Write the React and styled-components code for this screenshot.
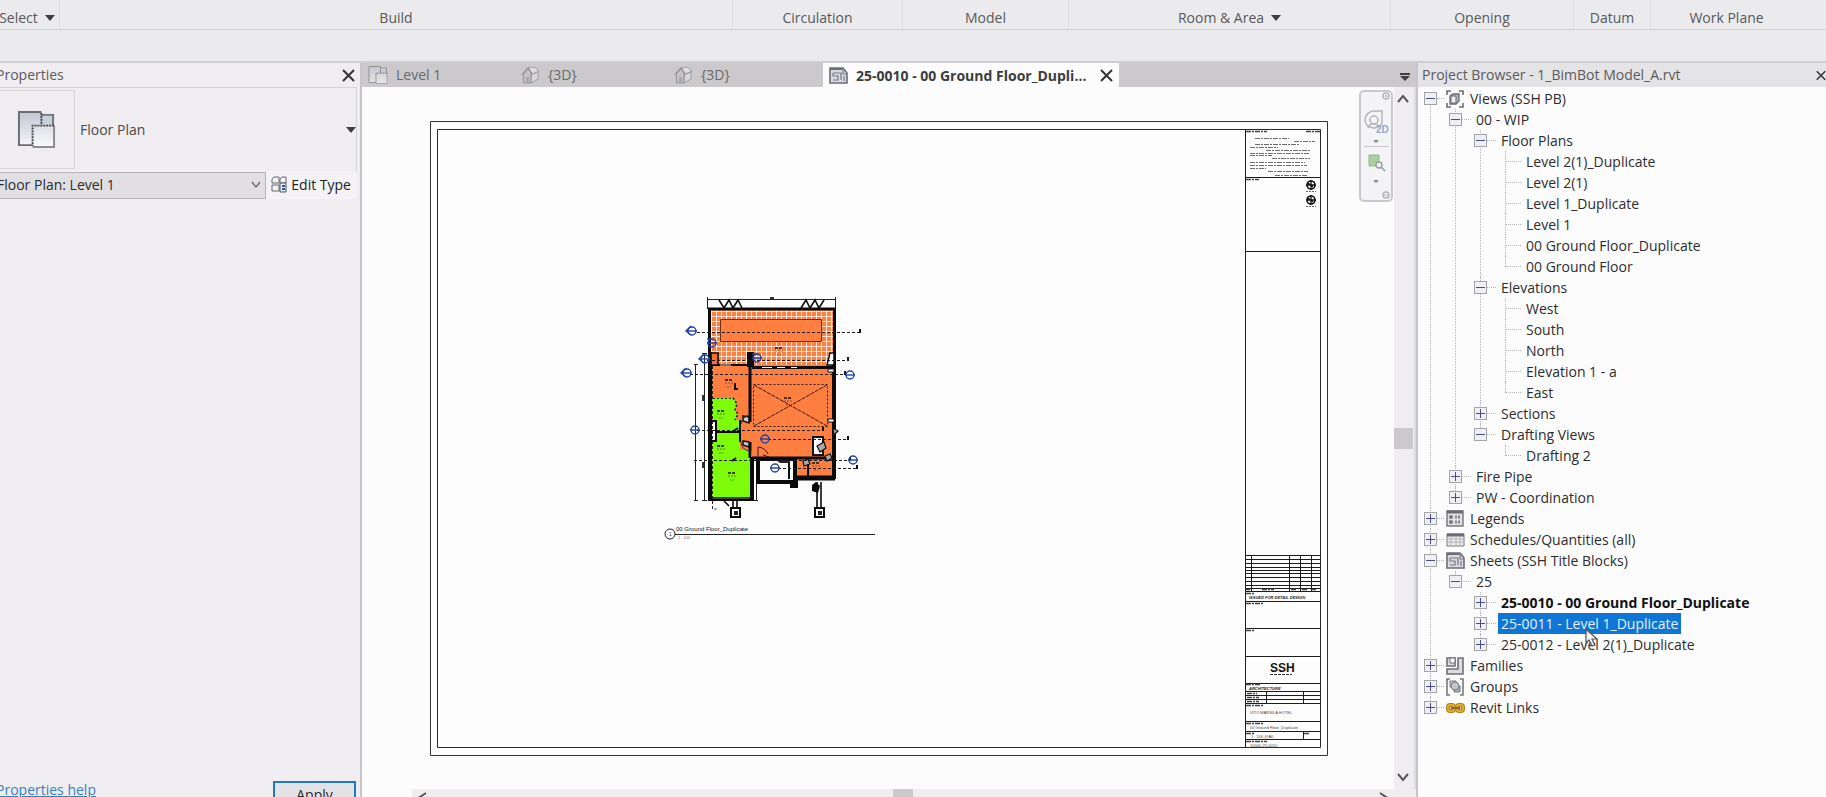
import React from "react";
import styled, { createGlobalStyle, css } from "styled-components";

const GlobalStyle = createGlobalStyle`
  * { box-sizing: border-box; }
  html, body { margin: 0; padding: 0; overflow: hidden; }
  body, button, select {
    font-family: "Open Sans", "Noto Sans", "Liberation Sans", sans-serif;
    font-size: 14px;
    color: #4a4a4c;
  }
  button, select { margin: 0; padding: 0; border: 0; background: none; border-radius: 0; }
`;

const dotted = "#b4b4b8";

/* ---------- shell ---------- */

const Shell = styled.div`
  display: flex;
  flex-direction: column;
  height: 100vh;
  overflow: hidden;
  background: #ebebed;
`;

const Ribbon = styled.nav`
  display: grid;
  grid-template-columns: 65fr 673fr 170fr 166fr 322fr 183fr 77fr 152fr 23fr;
  height: 30px;
  margin-left: -5px;
  border-bottom: 1px solid #d0d0d3;
  padding-bottom: 1px;
`;

const RibbonPanel = styled.div`
  display: flex;
  align-items: center;
  justify-content: center;
  gap: 7px;
  padding-top: 8px;
  border-right: 1px solid ${(p) => (p.$open ? "transparent" : "#dedee1")};
  font-size: 14px;
  line-height: 20px;
  color: #58585b;
  white-space: nowrap;
`;

const RibbonMenu = styled.button`
  display: flex;
  align-items: center;
  gap: 7px;
  font-size: 14px;
  line-height: 20px;
  color: #58585b;
`;

const OptionsBar = styled.div`
  height: 33px;
  border-bottom: 2px solid #cfcfd2;
`;

const Workspace = styled.main`
  flex: 1;
  display: grid;
  grid-template-columns: 362px minmax(0, 1fr) 410px;
  min-height: 0;
  margin-bottom: -12px;
`;

const PanelHeader = styled.header`
  display: flex;
  align-items: center;
  justify-content: space-between;
  height: 24px;
  background: ${(p) => p.$bg};
  color: #5a5a5d;
`;

const PanelTitle = styled.h2`
  margin: 0;
  font-size: 14px;
  font-weight: 400;
  line-height: 24px;
  white-space: nowrap;
`;

const IconButton = styled.button`
  display: flex;
  align-items: center;
  justify-content: center;
  flex: none;
  width: ${(p) => p.$w || 14}px;
  height: ${(p) => p.$h || 14}px;
`;

/* ---------- properties ---------- */

const Properties = styled.section`
  display: flex;
  flex-direction: column;
  margin-left: -4px;
  padding-right: 3px;
  border-right: 2px solid #c6c5c9;
  background: #efedf0;
`;

const TypeSelector = styled.div`
  display: flex;
  align-items: center;
  height: 84px;
  border-top: 1px solid #d5d4d8;
  border-right: 1px solid #d5d4d8;
`;

const TypeTile = styled.div`
  display: flex;
  align-items: center;
  justify-content: center;
  width: 79px;
  height: 79px;
  padding-left: 2px;
  border: 1px solid #d5d4d8;
  border-left: 0;
`;

const TypeName = styled.span`
  flex: 1;
  padding-left: 5px;
  font-size: 14px;
`;

const InstanceRow = styled.div`
  display: flex;
  align-items: center;
  height: 28px;
  padding-right: 6px;
  background: #f4f2f5;
`;

const SelectBox = styled.label`
  position: relative;
  display: block;
  width: 270px;
`;

const InstanceSelect = styled.select`
  appearance: none;
  width: 100%;
  height: 27px;
  padding: 0 30px 2px 0;
  border: 1px solid #b3b2b6;
  background: #e1dfe2;
  font-size: 14px;
  color: #2c2c2e;
`;

const SelectArrow = styled.svg`
  position: absolute;
  right: 5px;
  top: 9px;
  pointer-events: none;
`;

const EditType = styled.button`
  display: flex;
  align-items: center;
  gap: 3px;
  margin-left: auto;
  padding-bottom: 2px;
  font-size: 14px;
  color: #222;
  white-space: nowrap;
`;

const PropertiesFooter = styled.footer`
  display: flex;
  justify-content: space-between;
  margin-top: auto;
  padding: 0 1px 2px 0;
`;

const HelpLink = styled.a`
  font-size: 14px;
  line-height: 18px;
  color: #3a7fc0;
`;

const ApplyButton = styled.button`
  width: 83px;
  height: 26px;
  border: 2px solid #2379bd;
  background: #e3e2e6;
  font-size: 14px;
  color: #2c2c2e;
`;

/* ---------- drawing area ---------- */

const ViewArea = styled.section`
  display: flex;
  flex-direction: column;
  min-width: 0;
  background: #fcfcfc;
`;

const TabBar = styled.div`
  display: flex;
  height: 24px;
  padding-right: 6px;
  background: #cbc9cc;
`;

const Tab = styled.button`
  display: flex;
  align-items: center;
  gap: 8px;
  width: 153px;
  padding-left: 6px;
  font-size: 14px;
  line-height: 20px;
  color: #69686b;
  white-space: nowrap;
`;

const ActiveTab = styled.div`
  display: flex;
  align-items: center;
  justify-content: space-between;
  width: 296px;
  margin-left: 2px;
  padding: 0 6px;
  background: #fcfcfc;
`;

const ActiveTabButton = styled.button`
  display: flex;
  align-items: center;
  gap: 8px;
  font-size: 14px;
  font-weight: 700;
  color: #3c3c3f;
  white-space: nowrap;
`;

const TabMenu = styled.button`
  margin-left: auto;
`;

const ViewRow = styled.div`
  flex: 1;
  display: flex;
  min-height: 0;
`;

const Canvas = styled.div`
  position: relative;
  flex: 1;
  min-width: 0;
`;

const SheetDrawing = styled.svg`
  display: block;
  width: 100%;
  height: auto;
  font-family: "Liberation Sans", sans-serif;
`;

const NavBar = styled.div`
  position: absolute;
  top: 3px;
  right: 1px;
  display: flex;
  flex-direction: column;
  align-items: center;
  width: 34px;
  height: 112px;
  border: 2px solid #c9c9cc;
  border-radius: 5px;
  background: #f4f3f5;
`;

const VScroll = styled.div`
  display: flex;
  flex-direction: column;
  align-items: center;
  justify-content: space-between;
  width: 22px;
  padding: 4px 2px 4px 0;
  border-right: 2px solid #dcdbdf;
  background: #efedf0;
`;

const VThumb = styled.div`
  width: 19px;
  height: 21px;
  background: #cbc9cc;
`;

const HScroll = styled.div`
  display: flex;
  justify-content: space-between;
  height: 20px;
  margin-left: 50px;
  padding: 0 26px 0 4px;
  background: #efedf0;
`;

const HThumb = styled.div`
  width: 20px;
  height: 20px;
  background: #cbc9cc;
`;

/* ---------- project browser ---------- */

const Browser = styled.aside`
  display: flex;
  flex-direction: column;
  border-left: 2px solid #c6c5c9;
  background: #fcfcfc;
  overflow: hidden;
`;

const BrowserHead = styled.div`
  padding-left: 4px;
  background: #e4e3e6;
`;

const Tree = styled.ul`
  list-style: none;
  margin: 0;
  padding: ${(p) => (p.$root ? "1px 0 0" : "0 0 0 25px")};
`;

const TreeItem = styled.li`
  position: relative;
  &::before {
    content: "";
    position: absolute;
    left: 12px;
    top: ${(p) => (p.$start ? "10px" : "0")};
    bottom: 0;
    border-left: 1px dotted ${dotted};
  }
  &:last-child::before {
    bottom: auto;
    height: 10px;
  }
`;

const Row = styled.div`
  position: relative;
  display: flex;
  align-items: center;
  height: 21px;
`;

const Stem = styled.span`
  display: flex;
  align-items: center;
  flex: none;
  width: ${(p) => (p.$icon ? 28 : 30)}px;
  padding-left: ${(p) => (p.$leaf ? 12 : 6)}px;
  &::after {
    content: "";
    flex: 1;
    margin-right: 2px;
    border-top: 1px dotted ${dotted};
  }
`;

const Expander = styled.button`
  position: relative;
  width: 13px;
  height: 13px;
  border: 1px solid #a3a3a8;
  background: #f0f0f4;
  &::before {
    content: "";
    position: absolute;
    left: 1px;
    right: 1px;
    top: 5px;
    height: 1px;
    background: #4b4b91;
  }
  ${(p) =>
    p.$closed &&
    css`
      &::after {
        content: "";
        position: absolute;
        top: 1px;
        bottom: 1px;
        left: 5px;
        width: 1px;
        background: #4b4b91;
      }
    `}
`;

const Label = styled.span`
  padding: 0 3px;
  font-size: 14px;
  line-height: 21px;
  font-weight: ${(p) => (p.$bold ? 700 : 400)};
  color: ${(p) => (p.$selected ? "#e4f1fc" : p.$bold ? "#111" : "#2c2c2e")};
  background: ${(p) => (p.$selected ? "#0f76d6" : "transparent")};
  white-space: nowrap;
`;

const LabelIcon = styled.span`
  display: flex;
  flex: none;
  width: 21px;
`;

const Pointer = styled.svg`
  position: absolute;
  left: 117px;
  top: 15px;
  z-index: 2;
  pointer-events: none;
`;

/* ---------- icons ---------- */

const Caret = ({ w = 10, fill = "#3f3f42" }) => (
  <svg width={w} height={w / 2 + 1} viewBox="0 0 10 6" aria-hidden="true">
    <path d="M0 0h10L5 6z" fill={fill} />
  </svg>
);

const Cross = () => (
  <svg width="13" height="13" viewBox="0 0 13 13" aria-hidden="true">
    <path d="M1 1l11 11M12 1L1 12" stroke="#333336" strokeWidth="2" />
  </svg>
);

const Chevron = ({ d }) => (
  <svg width="12" height="14" viewBox="0 0 12 14" aria-hidden="true">
    <path d={d} fill="none" stroke="#55555a" strokeWidth="2" />
  </svg>
);

const PlanIcon = ({ big }) => (
  <svg width={big ? 39 : 20} height={big ? 39 : 18} viewBox={big ? "0 0 40 40" : "0 1 40 38"} preserveAspectRatio="none" aria-hidden="true">
    <defs>
      <linearGradient id="planShade" x1="0" y1="0" x2="0" y2="1">
        <stop offset="0" stopColor="#c3c7d0" />
        <stop offset="1" stopColor="#f4f4f9" />
      </linearGradient>
      <linearGradient id="planFront" x1="0" y1="0" x2="0" y2="1">
        <stop offset="0" stopColor="#dcdfe6" />
        <stop offset="1" stopColor="#fbfbfd" />
      </linearGradient>
    </defs>
    <g opacity={big ? 1 : 0.6}>
      <path d="M24 5h13v13H24z" fill="#c6d0da" stroke="#73747e" strokeWidth="2" />
      <path d="M2 2h23v14h-9v20H2z" fill="url(#planShade)" />
      <path d="M16 36H2V2h23" fill="none" stroke="#6b6c76" strokeWidth="2" />
      <path d="M16 16h22v22H16z" fill="url(#planFront)" />
      <path d="M38 16v22H16" fill="none" stroke="#8c8c95" strokeWidth="2" />
      <path d="M25 3v13M38 16H16v21" fill="none" stroke="#43434e" strokeWidth="2" strokeDasharray="2 1" />
    </g>
  </svg>
);

const HouseIcon = () => (
  <svg width="19" height="18" viewBox="0 0 19 18" aria-hidden="true">
    <path d="M2 8l5-6 6-1 5 4v8l-8 4H2z" fill="#c4c3c8" />
    <path d="M7 2l6-1 5 4-7 3z" fill="#dedde1" stroke="#a3a2a8" />
    <path d="M10 9l7-3v7l-7 4z" fill="#d8d7db" stroke="#a09fa5" />
    <path d="M1 9l6-7 4 6" fill="none" stroke="#94939a" strokeWidth="1.500" />
    <path d="M2.500 9v8H10V8" fill="none" stroke="#94939a" />
    <path d="M5 17v-6h3v6" fill="#a9a8ae" />
  </svg>
);

const SheetIcon = () => (
  <svg width="19" height="17" viewBox="0 0 19 17" aria-hidden="true">
    <path d="M1 1h13l4 5v10H1z" fill="#d8d9e1" stroke="#6c6c77" strokeWidth="1.600" />
    <path d="M1 2h12" stroke="#6c6c77" strokeWidth="2" />
    <path d="M4 6h8v7M4 6v3h5v4H4M14 2v5h4M15 9v5" fill="none" stroke="#787884" strokeWidth="1.200" />
  </svg>
);

const ViewsIcon = () => (
  <svg width="18" height="18" viewBox="0 0 18 18" aria-hidden="true">
    <path d="M1 5V1h4M13 1h4v4M17 13v4h-4M5 17H1v-4" fill="none" stroke="#6b6b72" strokeWidth="1.600" />
    <path d="M4 6l3-2h6v7l-3 3H4z" fill="#b4b4bc" stroke="#6b6b72" strokeWidth="1.300" />
    <path d="M5 6h5v7H5z" fill="#ededf2" stroke="#6b6b72" />
  </svg>
);

const LegendIcon = () => (
  <svg width="18" height="17" viewBox="0 0 18 17" aria-hidden="true">
    <path d="M1 1h16v15H1z" fill="#e2e2e6" stroke="#77777d" strokeWidth="1.400" />
    <path d="M1 2h16" stroke="#6b6b71" strokeWidth="3" />
    <circle cx="5" cy="7" r="2" fill="#77777d" />
    <circle cx="5" cy="12" r="2" fill="#77777d" />
    <path d="M9 7h6M9 12h6" stroke="#85858b" strokeWidth="3" strokeDasharray="2 1" />
  </svg>
);

const ScheduleIcon = () => (
  <svg width="19" height="14" viewBox="0 0 19 14" aria-hidden="true">
    <path d="M1 1h17v12H1z" fill="#ececf0" stroke="#77777d" />
    <path d="M1 2h17" stroke="#6b6b71" strokeWidth="3" />
    <path d="M1 6h17M1 9h17M5 3v10M10 3v10M14 3v10" stroke="#b4b4ba" />
  </svg>
);

const FamilyIcon = () => (
  <svg width="18" height="18" viewBox="0 0 18 18" aria-hidden="true">
    <path d="M1 1h8v8H1zM12 1h5v16H1v-5h11z" fill="#dcdce1" stroke="#6e6e75" strokeWidth="1.600" />
    <path d="M4 1h5v5H4z" fill="#fff" stroke="#6e6e75" />
  </svg>
);

const GroupIcon = () => (
  <svg width="18" height="18" viewBox="0 0 18 18" aria-hidden="true">
    <path d="M4 1H1v16h3M14 1h3v16h-3" fill="none" stroke="#77777d" strokeWidth="1.600" />
    <path d="M4 3h6v6H4z" fill="#d3d3d9" stroke="#77777d" />
    <path d="M8 8h6v6H8z" fill="#aeb1bc" stroke="#77777d" />
    <circle cx="9" cy="8" r="4" fill="#c3c6d0" stroke="#77777d" />
  </svg>
);

const LinkIcon = () => (
  <svg width="19" height="12" viewBox="0 0 19 12" aria-hidden="true">
    <rect x="2" y="3" width="6" height="6" rx="2" fill="#f6e6b4" stroke="#b58118" strokeWidth="4" />
    <rect x="11" y="3" width="6" height="6" rx="2" fill="#f6e6b4" stroke="#b58118" strokeWidth="4" />
    <rect x="2" y="3" width="6" height="6" rx="2" fill="none" stroke="#dcaa38" strokeWidth="2" />
    <rect x="11" y="3" width="6" height="6" rx="2" fill="none" stroke="#dcaa38" strokeWidth="2" />
    <path d="M5 6h9" stroke="#8e6718" strokeWidth="2" />
  </svg>
);

const EditTypeIcon = () => (
  <svg width="17" height="17" viewBox="0 0 17 17" aria-hidden="true">
    <path d="M1 3l2-2h5v6H1zM9 3l2-2h4v6H9zM1 9h7v6H1z" fill="#f5f5f7" stroke="#66666c" />
    <path d="M9 7h6v9H9z" fill="#e7eef6" stroke="#4d5260" />
    <path d="M11 10h3M11 13h3" stroke="#33588c" strokeWidth="2" />
  </svg>
);

const icons = {
  views: ViewsIcon,
  legend: LegendIcon,
  schedule: ScheduleIcon,
  sheet: SheetIcon,
  family: FamilyIcon,
  group: GroupIcon,
  link: LinkIcon,
};

/* ---------- data ---------- */

const leaf = (label) => ({ label });

const browserTree = [
  {
    label: "Views (SSH PB)",
    icon: "views",
    children: [
      {
        label: "00 - WIP",
        children: [
          {
            label: "Floor Plans",
            children: [
              "Level 2(1)_Duplicate",
              "Level 2(1)",
              "Level 1_Duplicate",
              "Level 1",
              "00 Ground Floor_Duplicate",
              "00 Ground Floor",
            ].map(leaf),
          },
          { label: "Elevations", children: ["West", "South", "North", "Elevation 1 - a", "East"].map(leaf) },
          { label: "Sections", closed: true },
          { label: "Drafting Views", children: [leaf("Drafting 2")] },
        ],
      },
      { label: "Fire Pipe", closed: true },
      { label: "PW - Coordination", closed: true },
    ],
  },
  { label: "Legends", icon: "legend", closed: true },
  { label: "Schedules/Quantities (all)", icon: "schedule", closed: true },
  {
    label: "Sheets (SSH Title Blocks)",
    icon: "sheet",
    children: [
      {
        label: "25",
        children: [
          { label: "25-0010 - 00 Ground Floor_Duplicate", closed: true, bold: true },
          { label: "25-0011 - Level 1_Duplicate", closed: true, selected: true },
          { label: "25-0012 - Level 2(1)_Duplicate", closed: true },
        ],
      },
    ],
  },
  { label: "Families", icon: "family", closed: true },
  { label: "Groups", icon: "group", closed: true },
  { label: "Revit Links", icon: "link", closed: true },
];

const ribbonPanels = ["Build", "Circulation", "Model"];
const ribbonPanelsRight = ["Opening", "Datum"];

function TreeNode({ node, start }) {
  const Icon = node.icon && icons[node.icon];
  const expandable = node.closed || node.children;
  return (
    <TreeItem $start={start} role="treeitem" aria-selected={!!node.selected} aria-expanded={expandable ? !node.closed : undefined}>
      <Row>
        <Stem $icon={!!Icon} $leaf={!expandable}>
          {expandable && <Expander $closed={node.closed} aria-label={(node.closed ? "Expand " : "Collapse ") + node.label} />}
        </Stem>
        {Icon && (
          <LabelIcon>
            <Icon />
          </LabelIcon>
        )}
        <Label $bold={node.bold} $selected={node.selected}>
          {node.label}
        </Label>
        {node.selected && (
          <Pointer width="13" height="19" viewBox="0 0 13 19" aria-hidden="true">
            <path d="M1 1v14l3-3 3 6 3-1-3-6h5z" fill="#f3f3f5" fillOpacity=".85" stroke="#55555a" strokeWidth="1.200" />
          </Pointer>
        )}
      </Row>
      {node.children && (
        <Tree role="group">
          {node.children.map((child) => (
            <TreeNode key={child.label} node={child} />
          ))}
        </Tree>
      )}
    </TreeItem>
  );
}

/* ---------- sheet drawing ---------- */

const sectionMarks = [
  [692, 331, -1],
  [712, 343, 1],
  [705, 359, -1],
  [757, 358, 1],
  [687, 373, -1],
  [850, 375, 0],
  [695, 430, 0],
  [765, 439, 0],
  [853, 460, 0],
  [775, 468, 0],
];

const sectionLines = [
  [697, 860, 332],
  [707, 848, 360],
  [690, 845, 374],
  [697, 823, 430],
  [768, 848, 439],
  [694, 850, 460],
  [778, 857, 468],
];

const roomTags = [
  [729, 380],
  [788, 398],
  [779, 348],
  [721, 411],
  [721, 446],
  [732, 473],
  [816, 463],
];

const columns = [
  [735, 512],
  [819, 512],
];

function FloorPlan() {
  return (
    <g>
      <defs>
        <pattern id="tiles" x="711" y="311" width="5" height="5" patternUnits="userSpaceOnUse">
          <rect width="5" height="5" fill="#ff7f40" />
          <path d="M0 .5h5M.5 0v5" stroke="#ffe3d5" />
        </pattern>
      </defs>
      {/* dimension strings */}
      <path d="M708 299.500h128M707.500 297v12M835.500 297v12M695.500 364v136M704.500 353v147M694 364.500h4M702 353.500h5M694 500.500h4M702 500.500h5M756.500 458v42M753 500.500h5" stroke="#222" fill="none" />
      <path d="M719 300l5 8 5-8 4 8 5-8 4 8M801 308l5-8 4 8 5-8 4 8 5-8" stroke="#111" strokeWidth="1.600" fill="none" />
      <path d="M770 298h4M703 395v6M703 462v6" stroke="#333" strokeWidth="2" />

      {/* floor fills */}
      <path d="M710 310h124v57H710z" fill="url(#tiles)" />
      <path d="M720.500 319.500h101v22h-101z" fill="#ff7f40" stroke="#6b3216" />
      <path d="M711 365h123v94h-82v-8H711z" fill="#ff7f40" />
      <path d="M794 457h40v21h-40z" fill="#ff7f40" />
      <path d="M711 398h22l4 6-2 6 3 4-3 6h5v30h10v49h-39z" fill="#7dfb08" />
      <path d="M733 398l4 6-2 6 3 4-3 6" fill="none" stroke="#111" strokeWidth="1.500" strokeDasharray="2 2" />
      <path d="M713 398.500h20" fill="none" stroke="#222" strokeDasharray="2 2" />

      {/* outer walls */}
      <path d="M709.500 499V309H834.500V369" fill="none" stroke="#0b0b0b" strokeWidth="3" />
      <path d="M834 365v114" stroke="#0b0b0b" strokeWidth="4" />
      <path d="M710 352v147h42v-42" fill="none" stroke="#0b0b0b" strokeWidth="4" />
      <path d="M712 498h38" stroke="#777" />
      <path d="M750 352v70M750 442v16" stroke="#0b0b0b" strokeWidth="3" />
      <path d="M747 352h7v15h-7z" fill="#0b0b0b" />
      <path d="M711 365h40" stroke="#0b0b0b" strokeWidth="2" />
      <path d="M720 365h11" stroke="#ddd" />
      <path d="M752 367.500h82" stroke="#0b0b0b" strokeWidth="3" />
      <path d="M762 367.500h10M777 367.500h8M791 367.500h6" stroke="#f2f2f2" />
      <path d="M711 353h7v12h-7z" fill="#f27037" stroke="#0b0b0b" strokeWidth="1.600" />
      <path d="M830 353h4v12h-7z" fill="#fff" stroke="#0b0b0b" strokeWidth="1.500" />
      <path d="M828 369h6v3h-6zM828 419h6v3h-6z" fill="#fff" stroke="#111" />
      <path d="M711 432h29M740 420v22" stroke="#0b0b0b" strokeWidth="2" />
      <path d="M711 421h5v20h-5z" fill="#fff" stroke="#0b0b0b" strokeWidth="2" />
      <path d="M743 416l6 1v6l-6-2zM743 441l6 1v5l-6-2z" fill="#ccc" stroke="#111" strokeWidth="1.500" />
      <path d="M741 424a10 10 0 0 1 9-9M741 442a9 9 0 0 0 9 9" fill="none" stroke="#333" />

      {/* service rooms */}
      <path d="M752 458h82" stroke="#0b0b0b" strokeWidth="3" />
      <path d="M758 459h37v23h-37z" fill="#fcfcfc" stroke="#0b0b0b" strokeWidth="4" />
      <path d="M789 462v17" stroke="#0b0b0b" strokeWidth="2" />
      <path d="M776 460h14v3h-10z" fill="#222" />
      <path d="M793 478h42" stroke="#0b0b0b" strokeWidth="5" />
      <path d="M808 458v19" stroke="#0b0b0b" strokeWidth="2" />
      <path d="M790 480h8v8h-8z" fill="#0b0b0b" />
      <path d="M812 485l4-3 4 4-2 7-6-2z" fill="#0b0b0b" />
      <path d="M813 437h10v18h-10z" fill="#fff" stroke="#111" strokeWidth="2" />
      <path d="M817 446l7-4 2 6-6 4zM803 461l5-2 2 5-6 2zM825 456l5-2 2 4-5 3zM833 428l5 3-4 4z" fill="#aaa" stroke="#111" strokeWidth="1.200" />
      <path d="M758 457v-10a12 12 0 0 1 10 7M763 455l6 2" fill="none" stroke="#222" />
      <path d="M732 432l6-4M732 461l4-3M738 389h-3v-6" stroke="#111" strokeWidth="2" fill="none" />

      {/* void over the living room */}
      <g fill="none" stroke="#32190d" strokeDasharray="2 2">
        <path d="M753.500 384.500h74v42h-74z" />
        <path d="M754 385l73 41M827 385l-73 41" strokeDasharray="4 1" />
      </g>
      <path d="M712.500 366v143h4" fill="none" stroke="#222" strokeDasharray="3 2" />

      {/* posts */}
      <path d="M733 500v9M737 500v9M817 482v26M821 482v26M724 501l5 5" stroke="#0b0b0b" strokeWidth="1.600" />
      {columns.map(([x, y]) => (
        <g key={x}>
          <rect x={x - 4} y={y - 4} width="9" height="9" fill="#fff" stroke="#0b0b0b" strokeWidth="2" />
          <rect x={x - 1} y={y - 1} width="4" height="4" fill="#222" />
        </g>
      ))}

      {/* sections */}
      {sectionLines.map(([x1, x2, y]) => (
        <g key={y}>
          <path d={`M${x1} ${y}.5H${x2}`} stroke="#1c1c1c" strokeDasharray="3 2" />
          <path d={`M${x2} ${y + 1}v-4`} stroke="#111" strokeWidth="2" />
        </g>
      ))}
      {sectionMarks.map(([x, y, dir]) => (
        <g key={`${x}-${y}`} stroke="#1f43a8" strokeWidth="1.400" fill="none">
          <circle cx={x} cy={y} r="4" />
          <path d={`M${x - 5} ${y}h10`} />
          {dir < 0 && <path d={`M${x - 1} ${y - 5}l-5 5 5 4`} />}
          {dir > 0 && <path d={`M${x - 5} ${y - 4}h5`} />}
        </g>
      ))}
      {roomTags.map(([x, y]) => (
        <g key={`${x}-${y}`} stroke="#2a1a10">
          <path d={`M${x - 4} ${y}h8`} strokeWidth="2" strokeDasharray="3 1" opacity=".8" />
          <path d={`M${x - 4} ${y + 3}h8M${x - 2} ${y + 7}h4`} opacity=".5" strokeDasharray="2 1" />
        </g>
      ))}

      {/* view title */}
      <circle cx="670" cy="534" r="5" fill="#fff" stroke="#222" />
      <path d="M675 534.500h200" stroke="#222" />
      <text x="669" y="536" fontSize="5" fill="#444">1</text>
      <text x="676" y="531" fontSize="6" fill="#111">00 Ground Floor_Duplicate</text>
      <text x="678" y="539" fontSize="4" fill="#777">1 : 100</text>
    </g>
  );
}

const revisionRows = [555, 559, 563, 567, 570, 573, 577, 581, 585, 588, 591];

const noteLines = [
  [1255, 138, 34], [1294, 141, 21], [1255, 144, 45], [1250, 147, 28], [1266, 150, 44], [1250, 153, 60],
  [1250, 155, 22], [1272, 158, 38], [1250, 162, 55], [1250, 165, 57], [1250, 168, 16], [1268, 171, 40], [1275, 175, 32],
];

function TitleBlock() {
  return (
    <g>
      <g fill="none" stroke="#1d1d1f">
        <path d="M1245.500 129v619M1245 177.500h76M1245 251.500h76M1245 601.500h76M1245 628.500h76M1245 656.500h76M1245 683.500h76M1245 691.500h76M1245 703.500h76M1245 721.500h76M1245 731.500h76M1245 739.500h76" />
        {revisionRows.map((y) => (
          <path key={y} d={`M1245 ${y}.5h76`} />
        ))}
        <path d="M1251.500 555v36M1289.500 555v36M1300.500 555v36M1311.500 555v36M1245 695.500h76M1245 699.500h76M1266.500 691v12M1303.500 691v12M1303.500 731v8" />
      </g>
      <g stroke="#6c6c71" strokeDasharray="5 1 2 1">
        {noteLines.map(([x, y, w]) => (
          <path key={`${x}-${y}`} d={`M${x} ${y}.5h${w}`} />
        ))}
      </g>
      <path d="M1246 131.500h21M1306 131.500h14M1246 179.500h13M1246 593.500h8M1246 603.500h17M1246 630.500h8M1246 684.500h14M1246 705.500h17M1246 723.500h17M1246 733.500h8M1304 733.500h6M1246 741.500h21M1247 693.500h10M1247 697.500h12M1247 701.500h12M1246 589.500h4M1262 589.500h12M1291 589.500h6M1302 589.500h5M1312 589.500h4" stroke="#444" strokeWidth="1.500" strokeDasharray="5 1 2 1" />
      {[185, 200].map((y) => (
        <g key={y} stroke="#111" fill="none">
          <circle cx="1311" cy={y} r="4" strokeWidth="1.600" />
          <path d={`M1306 ${y}h10M1311 ${y - 5}v10M1308 ${y - 2}l5 4`} strokeWidth="1.300" />
          <path d={`M1306 ${y + 6}.5h10`} strokeDasharray="2 1" stroke="#666" />
        </g>
      ))}
      <g fontWeight="700" fontStyle="italic" fill="#222">
        <text x="1249" y="599" fontSize="4">ISSUED FOR DETAIL DESIGN</text>
        <text x="1249" y="690" fontSize="4">ARCHITECTURE</text>
      </g>
      <text x="1270" y="672" fontSize="12" fontWeight="700" fill="#111">SSH</text>
      <path d="M1270 674.500h22" stroke="#333" strokeDasharray="3 1" />
      <g fontSize="4" fill="#444">
        <text x="1250" y="714">VITO MARSILA HOTEL</text>
        <text x="1250" y="729">00 Ground Floor_Duplicate</text>
        <text x="1251" y="738">1 : 100 @A0</text>
        <text x="1250" y="747">10000-25-0010</text>
      </g>
    </g>
  );
}

/* ---------- app ---------- */

export default function App() {
  return (
    <Shell>
      <GlobalStyle />
      <Ribbon aria-label="Ribbon panels">
        <RibbonPanel>
          <RibbonMenu>
            Select <Caret />
          </RibbonMenu>
        </RibbonPanel>
        {ribbonPanels.map((name) => (
          <RibbonPanel key={name}>{name}</RibbonPanel>
        ))}
        <RibbonPanel>
          <RibbonMenu>
            Room &amp; Area <Caret />
          </RibbonMenu>
        </RibbonPanel>
        {ribbonPanelsRight.map((name) => (
          <RibbonPanel key={name}>{name}</RibbonPanel>
        ))}
        <RibbonPanel $open>Work Plane</RibbonPanel>
      </Ribbon>
      <OptionsBar />

      <Workspace>
        <Properties>
          <PanelHeader $bg="#efedf0">
            <PanelTitle>Properties</PanelTitle>
            <IconButton aria-label="Close properties" $w={18}>
              <Cross />
            </IconButton>
          </PanelHeader>
          <TypeSelector>
            <TypeTile>
              <PlanIcon big />
            </TypeTile>
            <TypeName>Floor Plan</TypeName>
            <IconButton aria-label="Change type" $w={10}>
              <Caret />
            </IconButton>
          </TypeSelector>
          <InstanceRow>
            <SelectBox>
              <InstanceSelect aria-label="Instance filter" defaultValue="level1">
                <option value="level1">Floor Plan: Level 1</option>
              </InstanceSelect>
              <SelectArrow width="10" height="8" viewBox="0 0 10 8" aria-hidden="true">
                <path d="M1 1l4 5 4-5" fill="none" stroke="#66666b" strokeWidth="1.300" />
              </SelectArrow>
            </SelectBox>
            <EditType>
              <EditTypeIcon /> Edit Type
            </EditType>
          </InstanceRow>
          <PropertiesFooter>
            <HelpLink href="#help">Properties help</HelpLink>
            <ApplyButton>Apply</ApplyButton>
          </PropertiesFooter>
        </Properties>

        <ViewArea>
          <TabBar>
            <Tab>
              <PlanIcon /> Level 1
            </Tab>
            <Tab>
              <HouseIcon /> {"{3D}"}
            </Tab>
            <Tab>
              <HouseIcon /> {"{3D}"}
            </Tab>
            <ActiveTab>
              <ActiveTabButton>
                <SheetIcon /> 25-0010 - 00 Ground Floor_Dupli...
              </ActiveTabButton>
              <IconButton aria-label="Close view">
                <Cross />
              </IconButton>
            </ActiveTab>
            <TabMenu aria-label="Open views">
              <svg width="10" height="8" viewBox="0 0 10 8" aria-hidden="true">
                <path d="M0 0h10v2H0zM0 3h10L5 8z" fill="#3f3f42" />
              </svg>
            </TabMenu>
          </TabBar>
          <ViewRow>
            <Canvas>
              <SheetDrawing viewBox="362 87 1032 702" role="img" aria-label="Sheet 25-0010">
                <path d="M430.500 121.500h897v634h-897z" fill="#fefefe" stroke="#333336" />
                <path d="M437.500 129.500h883v618h-883z" fill="#fdfdfd" stroke="#2a2a2d" />
                <TitleBlock />
                <FloorPlan />
              </SheetDrawing>
              <NavBar>
                <svg width="30" height="108" viewBox="0 0 30 108" aria-hidden="true">
                  <g fill="none" stroke="#b5b5ba">
                    <circle cx="25" cy="4" r="3" strokeWidth="1.500" />
                    <path d="M24 3l2 2M26 3l-2 2" />
                    <path d="M13 19h8v12a9 9 0 0 1-17-3 9 9 0 0 1 9-9z" strokeWidth="1.500" />
                    <circle cx="13" cy="28" r="4" strokeWidth="1.500" />
                    <path d="M7 36a6 6 0 0 1 11-1" strokeWidth="1.500" />
                    <path d="M3 54.500h25" stroke="#c9c9cc" />
                    <circle cx="25" cy="103" r="3" strokeWidth="1.500" />
                    <path d="M23 103h4" />
                  </g>
                  <text x="15" y="41" fontSize="10" fontWeight="700" fontFamily="Liberation Sans, sans-serif" fill="#8cabd3">2D</text>
                  <path d="M12 48h6l-3 3zM12 88h6l-3 3z" fill="#88888d" />
                  <path d="M8 63h10v11H8z" fill="#a9cfa2" stroke="#91b98b" />
                  <circle cx="18" cy="73" r="3" fill="#eef3f6" stroke="#9a9aa0" strokeWidth="1.300" />
                  <path d="M20 75l4 4" stroke="#9a9aa0" strokeWidth="1.600" />
                </svg>
              </NavBar>
            </Canvas>
            <VScroll>
              <IconButton aria-label="Scroll up" $h={16}>
                <Chevron d="M1 10l5-6 5 6" />
              </IconButton>
              <VThumb />
              <IconButton aria-label="Scroll down" $h={16}>
                <Chevron d="M1 4l5 6 5-6" />
              </IconButton>
            </VScroll>
          </ViewRow>
          <HScroll>
            <IconButton aria-label="Scroll left">
              <Chevron d="M9 4L3 8l6 4" />
            </IconButton>
            <HThumb />
            <IconButton aria-label="Scroll right">
              <Chevron d="M3 4l6 4-6 4" />
            </IconButton>
          </HScroll>
        </ViewArea>

        <Browser>
          <BrowserHead>
            <PanelHeader $bg="#e4e3e6">
              <PanelTitle>Project Browser - 1_BimBot Model_A.rvt</PanelTitle>
              <IconButton aria-label="Close project browser" $w={10}>
                <Cross />
              </IconButton>
            </PanelHeader>
          </BrowserHead>
          <Tree $root role="tree">
            {browserTree.map((node, i) => (
              <TreeNode key={node.label} node={node} start={i === 0} />
            ))}
          </Tree>
        </Browser>
      </Workspace>
    </Shell>
  );
}
